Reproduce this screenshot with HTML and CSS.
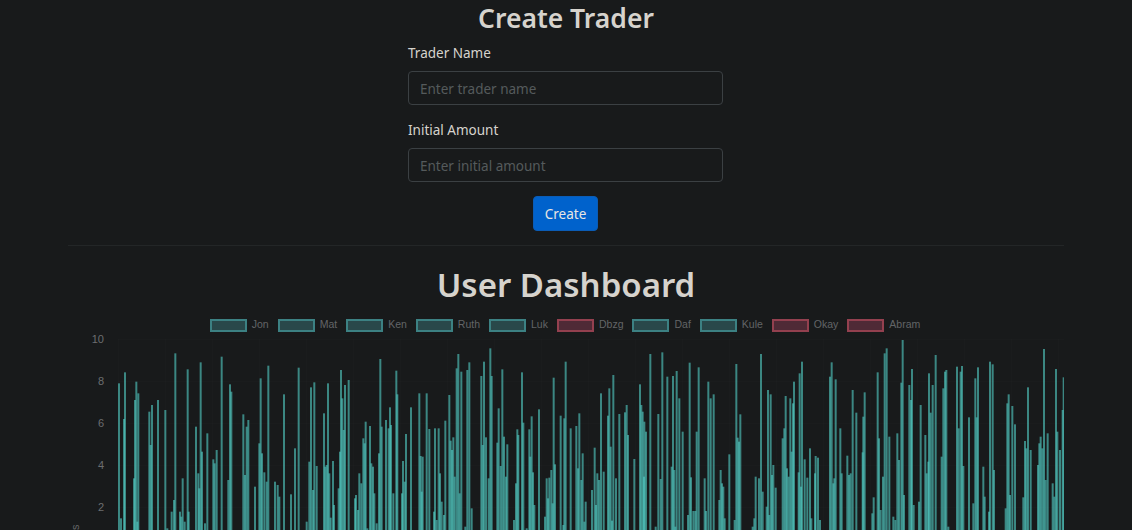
FILE: index.html
```html
<!DOCTYPE html>
<html lang="en">

<head>
  <meta charset="UTF-8" />
  <meta name="viewport" content="width=device-width, initial-scale=1.0" />
  <title>Traders</title>
  <link rel="stylesheet" href="styles.css">
</head>

<body>
  <div class="container">
    <h2>Create Trader</h2>
    <form class="trader-form">
      <label for="traderName">Trader Name</label>
      <input type="text" id="traderName" placeholder="Enter trader name">

      <label for="initialAmount">Initial Amount</label>
      <input type="text" id="initialAmount" placeholder="Enter initial amount">

      <button type="button">Create</button>
    </form>

    <hr>

    <h1>User Dashboard</h1>

    <div class="legend">
      <div class="legend-item"><span class="swatch"></span>Jon</div>
      <div class="legend-item"><span class="swatch"></span>Mat</div>
      <div class="legend-item"><span class="swatch"></span>Ken</div>
      <div class="legend-item"><span class="swatch"></span>Ruth</div>
      <div class="legend-item"><span class="swatch"></span>Luk</div>
      <div class="legend-item"><span class="swatch red"></span>Dbzg</div>
      <div class="legend-item"><span class="swatch"></span>Daf</div>
      <div class="legend-item"><span class="swatch"></span>Kule</div>
      <div class="legend-item"><span class="swatch red"></span>Okay</div>
      <div class="legend-item"><span class="swatch red"></span>Abram</div>
    </div>

    <div class="chart">
      <div class="axis-title">Points</div>
      <div class="ticks">
        <span>10</span>
        <span>8</span>
        <span>6</span>
        <span>4</span>
        <span>2</span>
      </div>
      <canvas id="bars" width="960" height="197"></canvas>
    </div>
  </div>

  <script src="chart.js"></script>
</body>

</html>
```

FILE: styles.css
```css
* {
  box-sizing: border-box;
  margin: 0;
  padding: 0;
}

html,
body {
  height: 100%;
  overflow: hidden;
}

body {
  background: #181a1b;
  color: #d6d3cd;
  font-family: 'Noto Sans', sans-serif;
  font-size: 14px;
}

.container {
  width: 996px;
  margin: 0 auto;
}

h2 {
  height: 38px;
  font-size: 26.5px;
  font-weight: 600;
  line-height: 37px;
  text-align: center;
}

h1 {
  height: 58px;
  margin-top: 15px;
  font-size: 33px;
  font-weight: 600;
  line-height: 47px;
  text-align: center;
}

.trader-form {
  display: flex;
  flex-direction: column;
  width: 315px;
  margin-left: 340px;
}

label {
  height: 33px;
  font-size: 13.5px;
  line-height: 30px;
}

input {
  width: 100%;
  height: 34px;
  margin-bottom: 10px;
  padding: 2px 11px 0;
  background: #181a1b;
  border: 1px solid #3b4043;
  border-radius: 4px;
  color: #d6d3cd;
  font-family: inherit;
  font-size: 13.5px;
}

input::placeholder {
  color: #555a5c;
}

button {
  align-self: center;
  width: 65px;
  height: 35px;
  margin-top: 4px;
  background: #0062cc;
  border: 1px solid #0b5cb5;
  border-radius: 4px;
  color: #e8e6e3;
  font-family: inherit;
  font-size: 13.5px;
}

hr {
  height: 1px;
  margin-top: 14px;
  background: #232627;
  border: none;
}

.legend {
  display: flex;
  justify-content: center;
  gap: 9px;
  height: 14px;
  margin-left: -2px;
  color: #636567;
  font-family: 'Liberation Sans', sans-serif;
  font-size: 10.5px;
  line-height: 11px;
}

.legend-item {
  display: flex;
  gap: 5px;
}

.swatch {
  width: 37px;
  height: 13px;
  background: #29484a;
  border: 2px solid #3c8183;
}

.swatch.red {
  background: #4f2a36;
  border-color: #93404f;
}

.chart {
  display: flex;
  height: 197px;
  overflow: hidden;
}

.axis-title {
  flex: none;
  width: 14px;
  height: 230px;
  padding-top: 8px;
  color: #636567;
  font-family: 'Liberation Sans', sans-serif;
  font-size: 11px;
  line-height: 14px;
  white-space: nowrap;
  writing-mode: vertical-rl;
  transform: rotate(180deg);
}

.ticks {
  display: flex;
  flex-direction: column;
  flex: none;
  width: 22px;
  height: 230px;
  color: #6c6e70;
  font-family: 'Liberation Sans', sans-serif;
  font-size: 11px;
  line-height: 12px;
  text-align: right;
}

.ticks span {
  height: 42px;
  flex: none;
}

#bars {
  display: block;
  flex: none;
  margin-left: 4px;
}
```

FILE: chart.js
```js
// x, top of each bar, read per section of the chart (3x units)
const sections = [
  [110, [27,145,33,550,45,112,42,252,72,430,75,195,79,140,85,175,82,560,118,230,122,330,126,210,144,195,166,225,172,580,185,530,192,495,196,55,210,530,214,545,218,430,224,560,233,103,236,530,258,275,265,415,272,82,268,460,276,350,285,565,292,295,310,373,314,385,320,345,335,65,355,435,360,148,364,170,400,238,405,420,410,275,415,255,435,455,448,325,452,130,456,355,463,412,470,440,475,92,495,440,503,450,508,485,522,178,543,478,555,340,566,98,590,560,598,380,603,157,609,465,613,142,620,393,642,235,646,395,650,390,654,145,658,415,662,548,669,378,672,510,686,460,690,350,693,105,697,190,701,285,705,150,716,135]],
  [350, [15,490,18,480,24,525,28,415,34,445,40,310,44,325,47,260,52,580,60,273,64,385,69,395,73,475,80,565,87,355,91,72,95,275,108,255,116,280,120,217,123,270,130,475,139,107,142,178,156,475,159,378,164,440,168,297,183,217,208,175,212,363,218,365,215,470,230,175,238,282,252,530,255,280,260,555,266,280,270,415,275,500,282,540,286,257,298,180,302,317,306,345,310,307,314,425,320,100,325,57,329,475,334,110,346,575,352,105,358,82,365,520,394,123,398,330,402,80,408,307,416,430,421,40,425,123,442,323,446,220,452,393,457,103,462,305,468,425,472,328,492,555,498,445,502,283,505,300,516,112,520,263,530,580,538,283,541,365,545,244,549,412,553,510,567,223,585,545,590,430,594,490,598,428,604,405,608,505,611,128,615,388,632,242,640,570,643,250,647,80,662,280,679,273,684,400,688,235,694,435,698,355,703,560,707,500]],
  [590, [6,465,14,338,18,510,22,415,27,435,33,175,41,410,54,242,58,160,62,335,66,557,70,120,78,430,88,237,105,232,110,210,114,300,133,372,150,148,154,210,158,230,163,260,168,290,162,425,181,57,197,575,205,237,212,432,217,52,232,125,245,395,249,123,253,405,256,575,260,108,268,190,278,290,294,540,299,83,303,427,310,528,316,528,320,290,326,97,344,430,348,528,355,140,362,190,371,178,388,495,392,405,396,445,400,455,404,550,418,358,434,555,439,87,443,308,451,238,447,320,488,575,493,550,497,425,507,430,513,57,518,470,530,515,534,165,538,540,542,178,546,420,550,390,557,458,578,310,583,280,587,183,591,400,596,425,601,190,605,350,612,140,609,205,626,412,629,115,636,80,633,455,644,373,652,428,660,340,664,550,675,415,677,363,684,368,690,555]],
  [830, [5,82,0,125,10,445,17,133,13,430,31,280,35,415,52,362,57,420,62,415,68,165,79,233,98,352,100,245,104,172,127,535,131,487,143,112,147,310,152,525,159,425,164,55,170,40,178,305,190,545,196,555,202,295,207,375,214,143,218,15,222,480,238,150,243,195,246,102,251,510,267,500,272,210,286,300,290,415,295,380,297,115,302,233,308,150,317,60,335,365,340,160,345,110,349,105,355,575,381,95,386,280,392,110,396,93,400,393,417,247,430,505,436,130,440,247,444,97,460,395,464,485,477,530,480,80,488,88,492,405,527,520,532,205,536,178,540,480,547,213,555,268,580,487,585,318,589,340,594,157,602,345,624,390,628,325,632,305,637,340,642,42,647,435,653,295,668,445,673,485,678,102,682,290,690,345,698,225,701,127]]
];

const canvas = document.getElementById('bars');
const ctx = canvas.getContext('2d');
const plotLeft = 108, plotTop = 333;

// faint grid
ctx.fillStyle = 'rgba(255, 255, 255, 0.01)';
for (let x = 10; x < canvas.width; x += 47) ctx.fillRect(x, 6, 1, canvas.height);
for (let y = 6; y < canvas.height; y += 42) ctx.fillRect(10, y, canvas.width, 1);

ctx.fillStyle = 'rgba(84, 208, 200, 0.6)';
sections.forEach(([start, bars]) => {
  for (let i = 0; i < bars.length; i += 2) {
    const x = start + bars[i] / 3 - plotLeft - 1;
    const y = 335 + bars[i + 1] / 3 - plotTop;
    ctx.fillRect(x, y, 2, canvas.height - y);
  }
});
```
